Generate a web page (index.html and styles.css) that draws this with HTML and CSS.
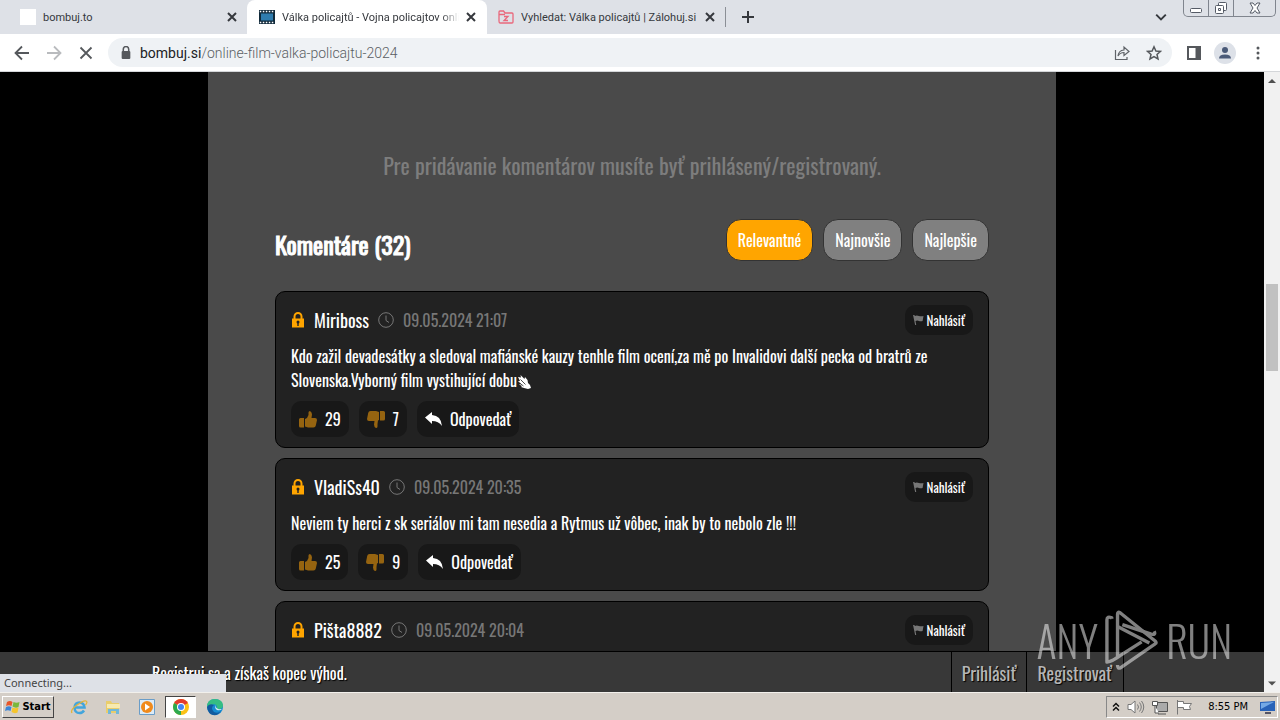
FILE: index.html
```html
<!DOCTYPE html>
<html lang="sk">
<head>
<meta charset="utf-8">
<title>Válka policajtů - Vojna policajtov online</title>
<link rel="stylesheet" href="styles.css">
</head>
<body>
<svg class="defs" aria-hidden="true">
  <symbol id="close" viewBox="0 0 10 10"><path d="M1 1l8 8M9 1L1 9" fill="none" stroke="currentColor" stroke-width="2"/></symbol>
  <symbol id="lock" viewBox="0 0 12 16"><path d="M2.500 7V4.500a3.500 3.500 0 0 1 7 0V7" fill="none" stroke="currentColor" stroke-width="2"/><path d="M0 6.500h12V15.500H0z" fill="currentColor"/><circle cx="6" cy="10" r="1.500" fill="#222"/><path d="M5.300 10h1.400v4H5.300z" fill="#222"/></symbol>
  <symbol id="clock" viewBox="0 0 16 16"><g fill="none" stroke="currentColor" stroke-width="1"><circle cx="8" cy="8" r="7.300"/><path d="M8 3.500V8.500l3 2"/></g></symbol>
  <symbol id="flag" viewBox="0 0 12 11"><path d="M0 0h1.500l.5 1q2-1 4.500 0t5 0L10.500 6.500q-2 .8-4 0t-3.800.2L3.500 11H2.300z" fill="currentColor"/></symbol>
  <symbol id="up" viewBox="0 0 18 17"><path d="M1.500 7H5v9.500H1.500Q0 16.500 0 15V8.500Q0 7 1.500 7zM6 8l2-1 1.500-3V1.500Q9.500 0 11 0q2 1 2 3.500L12.500 7H16q2 0 2 2l-1.200 5.500q-.3 2-2.300 2H9l-3-1z" fill="currentColor"/></symbol>
  <symbol id="down" viewBox="0 0 18 17"><path d="M16.500 9.500H13V0h3.500Q18 0 18 1.500V8q0 1.500-1.500 1.500zM12 9l-1 .5-.5 3.500v2.500q0 1.500-1.500 1.500-2-1-2-3.500L7.500 10H2Q0 10 0 8l1.200-6Q1.500 0 3.500 0H9l3 1z" fill="currentColor"/></symbol>
  <symbol id="reply" viewBox="0 0 17 14"><path d="M0 5.500L7 0v3q9 .5 10 11-3.500-5-10-5v3z" fill="currentColor"/></symbol>
</svg>

<header class="tabs">
  <div class="tab"><span class="blank"></span><span class="tab-title">bombuj.to</span><button class="close" aria-label="Close tab"><svg><use href="#close"/></svg></button></div>
  <div class="tab active">
    <svg class="fav" viewBox="0 0 16 14"><path fill="#10293a" d="M0 0h16v14H0z"/><path fill="#2f7cae" d="M2 3.500h12v7H2z"/><path stroke="#fff" stroke-width="1.500" stroke-dasharray="1.500 1.500" d="M.8 1.500h15M.8 12.500h15"/></svg>
    <span class="tab-title fade">Válka policajtů - Vojna policajtov onlin</span><button class="close" aria-label="Close tab"><svg><use href="#close"/></svg></button></div>
  <div class="tab">
    <svg class="fav" viewBox="0 0 16 14"><g fill="none" stroke="#e9687c" stroke-width="1.300"><path d="M1 11V2q0-1 1-1h3.500l1.500 2h7q1 0 1 1v8q0 1-1 1H2q-1 0-1-2zM1 4.500h6"/><path d="M6 6.500h4l-4 4h4"/></g></svg>
    <span class="tab-title">Vyhledat: Válka policajtů | Zálohuj.si</span><button class="close" aria-label="Close tab"><svg><use href="#close"/></svg></button></div>
  <button class="new-tab" aria-label="New tab"><svg viewBox="0 0 12 12"><path d="M6 0v12M0 6h12" stroke="currentColor" stroke-width="2"/></svg></button>
  <button class="search-tabs" aria-label="Search tabs"><svg viewBox="0 0 10 6"><path d="M1 1l4 4 4-4" fill="none" stroke="currentColor" stroke-width="1.600"/></svg></button>
  <div class="window-buttons">
    <button aria-label="Minimize"><svg viewBox="0 0 24 16"><rect x="6.500" y="8.500" width="11" height="4" rx="1" fill="#fff" stroke="#555b66"/></svg></button>
    <button aria-label="Restore"><svg viewBox="0 0 24 16"><g fill="#fff" stroke="#555b66"><rect x="9.500" y="2.500" width="8" height="8" rx="1"/><rect x="6.500" y="5.500" width="8" height="8" rx="1"/><path d="M9.500 8.500h2v2h-2z"/></g></svg></button>
    <button class="wide" aria-label="Close"><svg viewBox="0 0 24 16"><path d="M7 3h3l2 2.500L14 3h3l-3 5 3 5h-3l-2-2.500L10 13H7l3-5z" fill="#fff" stroke="#555b66"/></svg></button>
  </div>
</header>

<nav class="toolbar" aria-label="Browser">
  <button aria-label="Back"><svg viewBox="0 0 16 16"><path d="M15 8H2M8 1.500L1.500 8 8 14.500" fill="none" stroke="#55585c" stroke-width="1.800"/></svg></button>
  <button aria-label="Forward"><svg viewBox="0 0 16 16"><path d="M1 8h13M8 1.500L14.500 8 8 14.500" fill="none" stroke="#b9bbbe" stroke-width="1.800"/></svg></button>
  <button aria-label="Stop"><svg viewBox="0 0 16 16"><path d="M2.500 2.500l11 11M13.500 2.500l-11 11" fill="none" stroke="#55585c" stroke-width="1.800"/></svg></button>
  <div class="address">
    <svg class="padlock" viewBox="0 0 10 12"><path d="M2.500 5V3a2.500 2.500 0 0 1 5 0v2" fill="none" stroke="#55585c" stroke-width="1.400"/><rect x="1" y="4.500" width="8" height="7.500" rx="1" fill="#55585c"/></svg>
    <div class="url"><b>bombuj.si</b>/online-film-valka-policajtu-2024</div>
    <button aria-label="Share"><svg viewBox="0 0 16 16"><path d="M1.500 5v9.500H13V12M4 11q.5-5.500 6-6V2l5 4.500-5 4v-3q-4 0-6 3.500z" fill="none" stroke="#5f6368" stroke-width="1.200"/></svg></button>
    <button aria-label="Bookmark"><svg viewBox="0 0 16 16"><path d="M8 1.800l1.900 4.200 4.500.4-3.400 3 1 4.500-4-2.400-4 2.400 1-4.500-3.400-3 4.500-.4z" fill="none" stroke="#55585c" stroke-width="1.500"/></svg></button>
  </div>
  <button aria-label="Side panel"><svg viewBox="0 0 16 16"><path d="M2 2h12v12H2z" fill="none" stroke="#55585c" stroke-width="2"/><path d="M9.500 2H14v12H9.500z" fill="#55585c"/></svg></button>
  <button class="profile" aria-label="Profile"><svg viewBox="0 0 16 16"><circle cx="8" cy="5" r="3" fill="#4a5a78"/><path d="M2 13.500q0-4 6-4t6 4z" fill="#4a5a78"/></svg></button>
  <button aria-label="Menu"><svg viewBox="0 0 16 16"><g fill="#55585c"><circle cx="8" cy="3" r="1.500"/><circle cx="8" cy="8" r="1.500"/><circle cx="8" cy="13" r="1.500"/></g></svg></button>
</nav>

<div class="viewport">
  <div class="page">
    <div class="scroll-area">
      <main>
        <p class="notice">Pre pridávanie komentárov musíte byť prihlásený/registrovaný.</p>
        <div class="heading">
          <h2>Komentáre (32)</h2>
          <div class="sort"><button class="selected">Relevantné</button><button>Najnovšie</button><button>Najlepšie</button></div>
        </div>
        <article class="card">
          <div class="meta"><svg class="i-lock"><use href="#lock"/></svg><span class="user">Miriboss</span><svg class="i-clock"><use href="#clock"/></svg><time>09.05.2024 21:07</time><button class="report"><svg><use href="#flag"/></svg>Nahlásiť</button></div>
          <p>Kdo zažil devadesátky a sledoval mafiánské kauzy tenhle film ocení,za mě po Invalidovi další pecka od bratrů ze Slovenska.Vyborný film vystihující dobu<svg class="i-clap" viewBox="0 0 14 14"><path d="M1 2l3 .5L3.500 0l4 4L8 2l2.500 3 .5 3 2 2 1 3-3 1-4-1-3-1 1-1-3-1.500L4 9 1 6h2z" fill="currentColor"/><path d="M3.500 4.500l5 5M2.500 8l4 3" stroke="#222" stroke-width=".8"/></svg></p>
          <div class="actions"><button><svg class="thumb"><use href="#up"/></svg>29</button><button><svg class="thumb"><use href="#down"/></svg>7</button><button><svg class="i-reply"><use href="#reply"/></svg>Odpovedať</button></div>
        </article>
        <article class="card">
          <div class="meta"><svg class="i-lock"><use href="#lock"/></svg><span class="user">VladiSs40</span><svg class="i-clock"><use href="#clock"/></svg><time>09.05.2024 20:35</time><button class="report"><svg><use href="#flag"/></svg>Nahlásiť</button></div>
          <p>Neviem ty herci z sk seriálov mi tam nesedia a Rytmus už vôbec, inak by to nebolo zle !!!</p>
          <div class="actions"><button><svg class="thumb"><use href="#up"/></svg>25</button><button><svg class="thumb"><use href="#down"/></svg>9</button><button><svg class="i-reply"><use href="#reply"/></svg>Odpovedať</button></div>
        </article>
        <article class="card last">
          <div class="meta"><svg class="i-lock"><use href="#lock"/></svg><span class="user">Pišta8882</span><svg class="i-clock"><use href="#clock"/></svg><time>09.05.2024 20:04</time><button class="report"><svg><use href="#flag"/></svg>Nahlásiť</button></div>
        </article>
      </main>
    </div>
    <footer class="join"><span class="pitch">Registruj sa a získaš kopec výhod.</span><a href="#">Prihlásiť</a><a href="#">Registrovať</a></footer>
  </div>
  <div class="scrollbar">
    <svg viewBox="0 0 16 16"><path d="M4 10.500l4-4 4 4z" fill="#505050"/></svg>
    <div class="track"><div class="thumb-bar"></div></div>
    <svg viewBox="0 0 16 16"><path d="M4 6l4 4 4-4z" fill="#505050"/></svg>
  </div>
  <div class="status">Connecting...</div>
  <div class="watermark"><span>ANY</span>
    <svg viewBox="0 0 56 64"><g fill="none" stroke="currentColor" stroke-width="3.500" stroke-linejoin="round"><path d="M7 10V9q-5-2-5 2v44q6-1 14-7l22-14"/><path d="M13 50V5q0-3 3-1l36 29q2 2 0 3L16 61q-3 1-3-3"/><path d="M18 16l30 10q5 1 3-3M13 18l33 17"/></g></svg>
    <span>RUN</span></div>
</div>

<div class="taskbar">
  <button class="start"><svg viewBox="0 0 16 16"><path d="M2 3q3-2 5.500 0L6.500 7Q4 5.500 1 7z" fill="#e8562a"/><path d="M8.500 3q3 1.500 6 0l-1 5q-3 1.500-6-.500z" fill="#7ab83c"/><path d="M1 8q3-1.500 5.500 0l-1 4Q3 10.500 0 12z" fill="#3c86d8"/><path d="M7.500 8.500q3 1.500 6 0l-1 5q-3 1.500-6-.500z" fill="#f6c52c"/></svg>Start</button>
  <button aria-label="Internet Explorer"><svg viewBox="0 0 18 18"><path d="M14.500 9.500H4.500q.5-5 5-5 4.500.3 5 5zM4.500 10q.5 5 5 5 3 0 4.500-2.500" fill="none" stroke="#42a5dc" stroke-width="2.500"/><path d="M2 15q-2-3 5-8t9-4q2 1-.5 4" fill="none" stroke="#e2b43a" stroke-width="1.300"/></svg></button>
  <button aria-label="Explorer"><svg viewBox="0 0 18 18"><path d="M2 3h5l1 2h7v10H2z" fill="#e9cd6b"/><path d="M3 6h13v4H3z" fill="#f7eab0"/><path d="M4 16v-5h11v5h-3v-3H7v3z" fill="#72b8d8"/></svg></button>
  <button aria-label="Media Player"><svg viewBox="0 0 18 18"><path d="M1.500 1.500h15v15h-15z" fill="#dcebf7" stroke="#6a9dc8"/><circle cx="9" cy="9" r="6" fill="#f08a1c"/><path d="M7 5.500l5 3.500-5 3.500z" fill="#fff"/></svg></button>
  <button class="pressed" aria-label="Chrome"><svg viewBox="0 0 18 18"><circle cx="9" cy="9" r="8" fill="#fbc116"/><path d="M9 9L2.100 5A8 8 0 0 1 15.900 5z" fill="#e33b2e"/><path d="M9 9v8A8 8 0 0 1 2.100 5z" fill="#2da94f"/><circle cx="9" cy="9" r="4" fill="#fff"/><circle cx="9" cy="9" r="3" fill="#4285f4"/></svg></button>
  <button aria-label="Edge"><svg viewBox="0 0 18 18"><circle cx="9" cy="9" r="8" fill="#168bd2"/><path d="M1 9q0-8 8-8 7.500.5 8 6 0 4-4 4H10q2-2 0-4T1 9z" fill="#35bd83"/><path d="M1 9q2-4 7-2-4 3 0 7 4 2 7-1-3 5-8 4-5-1-6-8z" fill="#125b9f"/><path d="M10 7q-2 3 1 5 3 1 5-1l-3 .2q-4-1-3-4.200z" fill="#d7ecf2"/></svg></button>
  <div class="tray">
    <svg viewBox="0 0 10 16"><path d="M2 7.500l3-3 3 3M2 11.500l3-3 3 3" fill="none" stroke="#111" stroke-width="1.500"/></svg>
    <svg class="wide-icon" viewBox="0 0 18 16"><path d="M1 5.500h3L8 2v12l-4-3.500H1z" fill="#fff" stroke="#777"/><path d="M10.500 5.500q2 2.500 0 5M12.500 3.500q3.500 4.500 0 9M14.500 2q4.500 6 0 12" fill="none" stroke="#777"/></svg>
    <svg class="wide-icon" viewBox="0 0 18 16"><path d="M5.500 3.500h11v9h-11zM7 15h8" fill="#aaa" stroke="#555"/><path d="M1.500 2.500h5v4h-5zM4 7v7h4" fill="#fff" stroke="#555"/></svg>
    <svg class="wide-icon" viewBox="0 0 18 16"><path d="M2.500 1v14.500M2.500 2.500h6v2h8l-2 3 1 3H8.500v-2h-6" fill="#fff" stroke="#777"/></svg>
    <time>8:55 PM</time>
    <svg class="wide-icon" viewBox="0 0 18 16"><path d="M1 3l15-1v10L1 12z" fill="#2862b8"/><path d="M2 4l13-1-13 7z" fill="#74a9e6"/><path d="M6 13h6v2H6z" fill="#556"/></svg>
  </div>
</div>
</body>
</html>
```
FILE: styles.css
```css
* { box-sizing: border-box; }
body {
  margin: 0;
  height: 100vh;
  display: flex;
  flex-direction: column;
  overflow: hidden;
  font-family: Oswald, "Liberation Sans Narrow", "Roboto Condensed", "Liberation Sans", sans-serif;
}
button { margin: 0; padding: 0; border: 0; background: none; font: inherit; color: inherit; }
svg { display: block; flex: none; }
.defs { position: absolute; width: 0; height: 0; }

.tabs { display: flex; flex: none; height: 34px; background: #dee1e7; color: #35383d; font: 11px Roboto, "Liberation Sans", sans-serif; }
.tab { flex: 0 1 238px; display: flex; align-items: center; gap: 7px; padding: 0 10px 0 11px; min-width: 0; }
.tab:first-child { flex-basis: 247px; padding-left: 20px; }
.tab.active { flex-basis: 240px; background: #fff; border-radius: 8px 8px 0 0; padding: 0 11px 0 12px; }
.tab-title { flex: 1; min-width: 0; overflow: hidden; white-space: nowrap; }
.fade { -webkit-mask-image: linear-gradient(90deg, #000 90%, transparent); mask-image: linear-gradient(90deg, #000 90%, transparent); }
.blank { width: 16px; height: 16px; background: #fff; }
.fav { width: 16px; height: 14px; }
.close svg { width: 10px; height: 10px; }
.new-tab { margin: 7px 0; padding: 0 16px; border-left: 1px solid #8b8f96; }
.new-tab svg { width: 12px; height: 12px; }
.search-tabs { margin-left: auto; padding-right: 16px; }
.search-tabs svg { width: 12px; height: 8px; }
.window-buttons { display: flex; height: 17px; margin-right: 4px; border: 1px solid #80858e; border-top: 0; border-radius: 0 0 5px 5px; }
.window-buttons button { width: 25px; border-right: 1px solid #80858e; }
.window-buttons .wide { width: 41px; border: 0; }
.window-buttons svg { height: 16px; width: 24px; margin: auto; }

.toolbar { flex: none; display: flex; align-items: center; gap: 8px; height: 38px; padding: 0 10px; background: #fff; border-bottom: 1px solid #d4d6d9; }
.toolbar button { width: 24px; height: 24px; display: grid; place-items: center; }
.toolbar button svg { width: 16px; height: 16px; }
.address { flex: 1; display: flex; align-items: center; gap: 8px; height: 29px; padding: 0 6px 0 12px; margin: 0 2px; border-radius: 15px; background: #eff2f5; }
.padlock { width: 12px; height: 13px; }
.url { flex: 1; font: 300 14px Roboto, "Open Sans", sans-serif; color: #5a5e63; }
.url b { font-weight: 400; color: #202124; }
.toolbar .profile { width: 22px; height: 22px; margin-right: 2px; border-radius: 50%; background: #dde1e8; }

.viewport { flex: 1; min-height: 0; display: flex; position: relative; background: #000; }
.page { flex: 1; min-width: 0; display: flex; flex-direction: column; }
.scroll-area { flex: 1; min-height: 0; overflow: hidden; }
main { max-width: 848px; min-height: 100%; margin: 0 auto; padding: 76px 67px 0; background: #4a4a4a; color: #fff; }
.notice { margin: 0 0 37px; text-align: center; font-size: 22px; line-height: 34px; color: #7d7d7d; }
.heading { display: flex; justify-content: space-between; align-items: center; margin-bottom: 30px; }
h2 { margin: 8px 0 0; font-size: 24px; font-weight: 400; line-height: 32px; -webkit-text-stroke: 1px #fff; }
.sort { display: flex; gap: 10px; }
.sort button { min-width: 76px; height: 42px; padding: 0 11px; border: 1px solid #333; border-radius: 15px; background: #808080; font-size: 16px; }
.sort .selected { background: #ffa500; }

.card { margin-bottom: 10px; padding: 12px 15px 10px; border: 1px solid #000; border-radius: 10px; background: #222; }
.meta { display: flex; align-items: center; gap: 9px; height: 32px; margin-bottom: 8px; }
.i-lock { width: 12px; height: 16px; margin: 0 1px; color: #ffa500; }
.meta .user { font-size: 18px; }
.i-clock { width: 16px; height: 16px; color: #777; }
.meta time { font-size: 16px; color: #777; }
.report { display: flex; align-items: center; gap: 3px; height: 30px; margin-left: auto; padding: 0 8px; border-radius: 10px; background: #181818; font-size: 13px; }
.report svg { width: 11px; height: 10px; color: #777; }
.card p { margin: 0 0 9px; font-size: 16px; line-height: 24px; }
.i-clap { display: inline-block; width: 14px; height: 14px; vertical-align: -2px; }
.actions { display: flex; gap: 10px; }
.actions button { display: flex; align-items: center; gap: 8px; height: 36px; padding: 0 8px; border-radius: 10px; background: #181818; font-size: 16px; }
.thumb { width: 18px; height: 17px; color: #966410; }
.i-reply { width: 17px; height: 14px; }

.join { flex: none; display: flex; align-items: stretch; height: 41px; padding: 0 140px 0 152px; border-top: 1px solid #000; background: #383838; color: #fff; font-size: 16px; line-height: 42px; text-shadow: 1px 1px 1px #000; }
.pitch { flex: 1; }
.join a { padding: 0 10px; border-left: 1px solid #000; color: #b5b5b5; font-size: 18px; text-decoration: none; }
.join a:last-child { padding: 0 11px 0 10px; border-right: 1px solid #000; }

.scrollbar { width: 16px; display: flex; flex-direction: column; background: #f1f1f1; }
.scrollbar svg { width: 16px; height: 17px; }
.track { flex: 1; padding-top: 195px; }
.thumb-bar { height: 87px; margin: 0 2px; background: #c1c1c1; }

.status { position: absolute; left: 0; bottom: 0; width: 226px; height: 18px; padding-left: 4px; background: #dee1e7; color: #444; font: 11px/18px "Noto Sans", sans-serif; }
.watermark { position: absolute; right: 48px; bottom: 20px; display: flex; align-items: center; gap: 7px; color: #fff; opacity: .5; font-size: 42px; font-weight: 300; line-height: 64px; pointer-events: none; }
.watermark svg { width: 54px; height: 62px; }

.taskbar { flex: none; display: flex; align-items: center; gap: 3px; height: 28px; padding: 0 2px; background: #d4cec7; border-top: 1px solid #f2f0ec; font: 11px "DejaVu Sans Condensed", sans-serif; color: #000; }
.taskbar button { width: 31px; height: 22px; display: grid; place-items: center; }
.taskbar button svg { width: 18px; height: 18px; }
.taskbar .start { width: 52px; margin-right: 6px; display: flex; align-items: center; justify-content: center; gap: 1px; border: 1px solid; border-color: #fff #444 #444 #fff; font-weight: bold; }
.taskbar .start svg { width: 16px; height: 16px; }
.taskbar .pressed { border: 1px solid; border-color: #444 #fff #fff #444; background: #fff; }
.tray { display: flex; align-items: center; gap: 6px; height: 22px; margin-left: auto; padding: 0 0 0 4px; border: 1px solid; border-color: #888 #fff #fff #888; }
.tray svg { width: 10px; height: 16px; }
.tray .wide-icon { width: 18px; }
.tray time { margin: 0 5px 0 9px; }
```
